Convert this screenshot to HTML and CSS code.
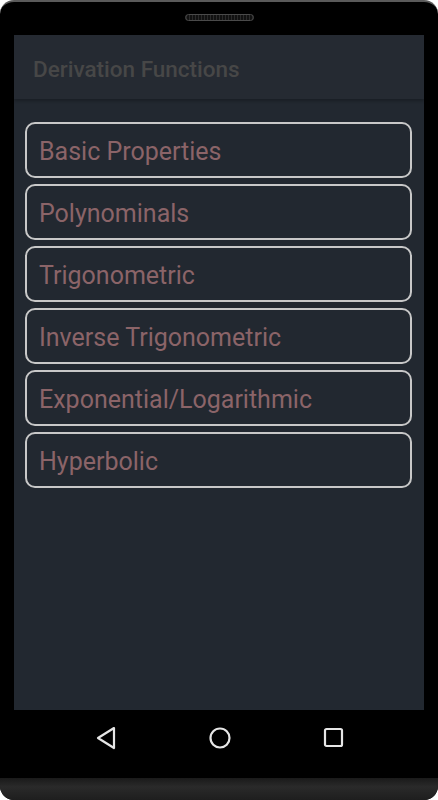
FILE: index.html
```html
<!DOCTYPE html>
<html>
<head>
<meta charset="utf-8">
<link rel="stylesheet" href="styles.css">
</head>
<body>
<div class="phone">
  <div class="top"><div class="speaker"></div></div>
  <div class="screen">
    <div class="appbar"><span class="title">Derivation Functions</span></div>
    <div class="list">
      <div class="item">Basic Properties</div>
      <div class="item">Polynominals</div>
      <div class="item">Trigonometric</div>
      <div class="item">Inverse Trigonometric</div>
      <div class="item">Exponential/Logarithmic</div>
      <div class="item">Hyperbolic</div>
    </div>
  </div>
  <div class="nav">
    <svg class="nav-icon back" width="22" height="24" viewBox="0 0 22 24"><path d="M19 2 L3 12 L19 22 Z" fill="none" stroke="#e6e6e6" stroke-width="2.2" stroke-linejoin="round"/></svg>
    <svg class="nav-icon home" width="24" height="24" viewBox="0 0 24 24"><circle cx="12" cy="12" r="9.5" fill="none" stroke="#e6e6e6" stroke-width="2.2"/></svg>
    <svg class="nav-icon recent" width="22" height="22" viewBox="0 0 22 22"><rect x="2" y="2" width="17" height="17" rx="1.5" fill="none" stroke="#e6e6e6" stroke-width="2.2"/></svg>
  </div>
  <div class="chin"></div>
</div>
</body>
</html>
```

FILE: styles.css
```css
html, body {
  margin: 0;
  padding: 0;
  background: #ffffff;
}
.phone {
  width: 438px;
  height: 800px;
  box-sizing: border-box;
  background: #000;
  border-radius: 14px;
  border-top: 2px solid #5a5a5a;
  overflow: hidden;
  display: flex;
  flex-direction: column;
}
.top {
  height: 33px;
  display: flex;
  justify-content: center;
  align-items: flex-start;
}
.speaker {
  margin-top: 12px;
  width: 69px;
  height: 7px;
  box-sizing: border-box;
  border: 1px solid #4a4a4a;
  border-radius: 4px;
  background: repeating-linear-gradient(90deg, #2a2a2a 0 1px, #111 1px 3px);
}
.screen {
  margin: 0 14px;
  height: 675px;
  background: #222830;
  display: flex;
  flex-direction: column;
}
.appbar {
  height: 64px;
  background: #252a32;
  box-shadow: 0 2px 3px rgba(0,0,0,0.25);
  display: flex;
  align-items: center;
  padding-left: 19px;
  position: relative;
  z-index: 1;
}
.title {
  font-family: Roboto, "Noto Sans", sans-serif;
  font-weight: 500;
  font-size: 22.5px;
  color: #474747;
  margin-top: 4px;
}
.list {
  padding: 23px 12px 0 11px;
  display: flex;
  flex-direction: column;
  gap: 6px;
}
.item {
  height: 56px;
  box-sizing: border-box;
  border: 2px solid #c8c8c8;
  border-radius: 10px;
  display: flex;
  align-items: center;
  padding-left: 12px;
  padding-top: 2px;
  font-family: Roboto, "Noto Sans", sans-serif;
  font-size: 25px;
  color: #8b6468;
}
.nav {
  height: 68px;
  box-sizing: border-box;
  display: flex;
  align-items: flex-start;
  justify-content: center;
  padding-top: 16px;
}
.back { margin-right: 91px; margin-left: 2px; }
.home { margin-right: 95px; }
.recent { margin-left: -4px; margin-top: 1px; }
.chin {
  flex: 1;
  background: linear-gradient(#1a1a1a, #2a2a2a 40%, #1e1e1e);
}
```
